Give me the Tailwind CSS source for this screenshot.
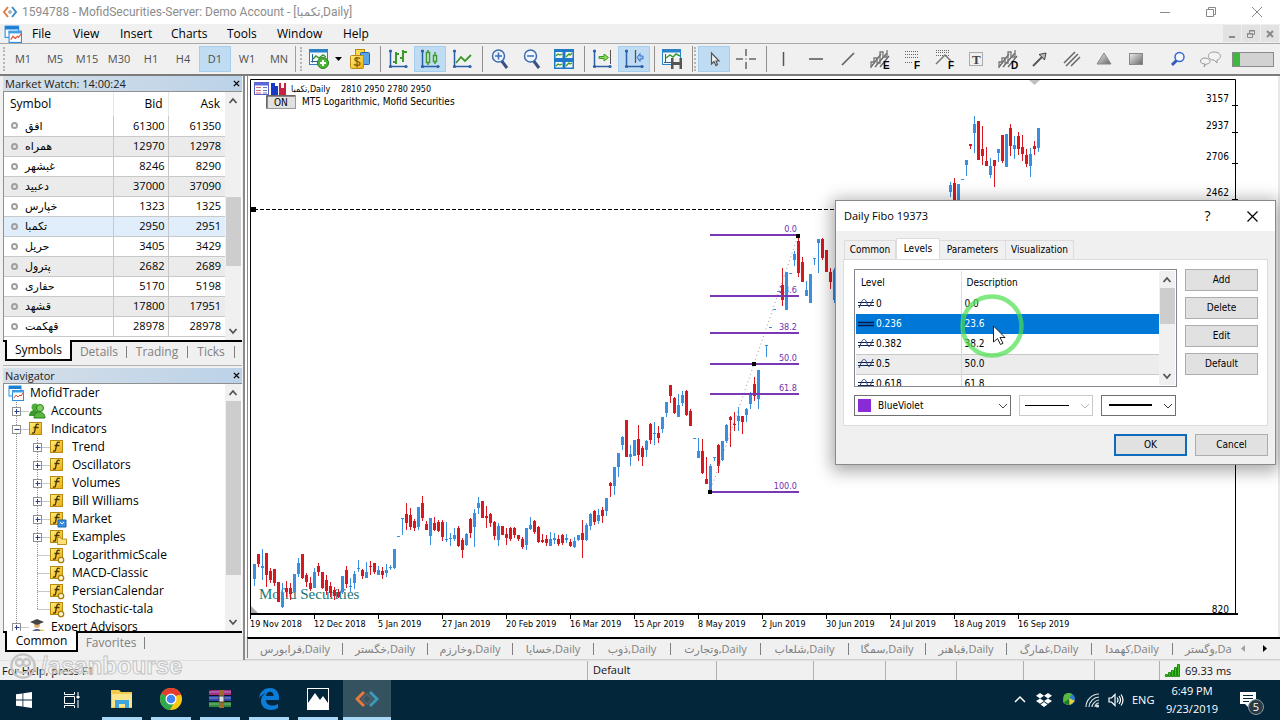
<!DOCTYPE html>
<html lang="en">
<head>
<meta charset="UTF-8">
<meta name="viewport" content="width=device-width, initial-scale=1.0">
<title>1594788 - MofidSecurities-Server: Demo Account</title>
<script src="https://cdn.jsdelivr.net/npm/@tailwindcss/browser@4"></script>
</head>
<body class="relative h-screen min-h-[600px] flex flex-col overflow-hidden bg-[#f0f0f0] text-black text-[12px] leading-4 font-['Open_Sans','DejaVu_Sans',sans-serif]">

<svg class="absolute w-0 h-0">
<defs>
<linearGradient id="gold" x1="0" y1="0" x2="1" y2="1"><stop offset="0" stop-color="#fff27a"/><stop offset="1" stop-color="#e8ab10"/></linearGradient>
<linearGradient id="steel" x1="0" y1="0" x2="1" y2="1"><stop offset="0" stop-color="#eee"/><stop offset="1" stop-color="#666"/></linearGradient>
</defs>
<symbol id="i-app" viewBox="0 0 16 16"><rect x="1" y="1" width="12" height="10" fill="#fff" stroke="#2f8fe0"/><path d="M1 2.500h12" stroke="#1c7fd6" stroke-width="3"/><rect x="4.500" y="5.500" width="11" height="10" fill="#fff" stroke="#2f8fe0"/><path d="M4 6.500h12" stroke="#3fa0ea" stroke-width="2"/><path d="M6 13l2-3 2 2 2-2 1 1 2-3" fill="none" stroke="#e0502a"/></symbol>
<symbol id="i-fx" viewBox="0 0 18 18"><rect x="0.500" y="2.500" width="12" height="12" fill="url(#gold)" stroke="#b98a12"/><path d="M10 4.500c-2-1-3 0-3.300 2L5.500 12c-.3 1.200-1 1.400-2.500.8M4.500 7.500h5" fill="none" stroke="#4a3200" stroke-width="1.300"/></symbol>
<symbol id="i-axes" viewBox="0 0 22 22"><path d="M3.500 2v16.500H20" fill="none" stroke="#2b5fa8" stroke-width="1.500"/><circle cx="3.500" cy="3" r="1.600" fill="#2b5fa8"/><circle cx="3.500" cy="18.500" r="1.600" fill="#2b5fa8"/><circle cx="19" cy="18.500" r="1.600" fill="#2b5fa8"/></symbol>
<symbol id="i-up" viewBox="0 0 10 10"><path d="M1.500 7L5 3l3.500 4" fill="none" stroke="#505050" stroke-width="1.700"/></symbol>
<symbol id="i-down" viewBox="0 0 10 10"><path d="M1.500 3L5 7l3.500-4" fill="none" stroke="#505050" stroke-width="1.700"/></symbol>
<symbol id="i-close" viewBox="0 0 8 8"><path d="M1 1l6 6M7 1L1 7" stroke="#000" stroke-width="1.600"/></symbol>
<symbol id="i-waves" viewBox="0 0 22 22"><path d="M2 19L12 6M6 19L18 5M11 19L20 8" stroke="#666" stroke-width="1.300"/><path d="M2 20V14H5V10H8V15H11V4H14V9H18V2" fill="none" stroke="#777" stroke-width="1.300"/></symbol>
<symbol id="i-level" viewBox="0 0 16 12"><path d="M0 4.500h16M0 7.500h16" stroke="#10204a"/><path d="M1 10L4 3c1-2 3-2 4 0l1.500 4c1 2 2 2 3 0L15 1" fill="none" stroke="#24407a"/></symbol>
</svg>

<!-- window title -->
<header class="h-6 shrink-0 flex items-center bg-white text-[#8c8c8c]">
  <svg class="w-4 h-4 ml-[2px]" viewBox="0 0 16 16"><path d="M6 3L2 8l4 5" fill="none" stroke="#e8793a" stroke-width="2"/><path d="M10 3l4 5-4 5" fill="none" stroke="#3a8fc8" stroke-width="2"/><path d="M8 5.500L10.500 8 8 10.500 5.500 8z" fill="#a8b4bc"/></svg>
  <h1 class="ml-1 grow whitespace-nowrap font-['Roboto','DejaVu_Sans',sans-serif]">1594788 - MofidSecurities-Server: Demo Account - [تکمبا,Daily]</h1>
  <button class="w-[46px] flex justify-center" aria-label="Minimize"><svg class="w-3 h-3" viewBox="0 0 12 12"><path d="M1 6.500h10" stroke="#888"/></svg></button>
  <button class="w-[46px] flex justify-center" aria-label="Restore"><svg class="w-3 h-3" viewBox="0 0 12 12" fill="none" stroke="#888"><path d="M1.500 3.500h7v7h-7zM3.500 3.500v-2h7v7h-2"/></svg></button>
  <button class="w-[46px] flex justify-center" aria-label="Close"><svg class="w-3 h-3" viewBox="0 0 12 12"><path d="M1 1l10 10M11 1L1 11" stroke="#888"/></svg></button>
</header>

<!-- menu -->
<nav class="h-5 shrink-0 flex items-center border-b border-[#a8a8a8]">
  <svg class="w-[18px] h-[18px] ml-1 mr-[10px]"><use href="#i-app"/></svg>
  <div class="grow grid grid-cols-[41px_47px_51px_56px_50px_66px_50px] whitespace-nowrap">
    <a href="#">File</a><a href="#">View</a><a href="#">Insert</a><a href="#">Charts</a><a href="#">Tools</a><a href="#">Window</a><a href="#">Help</a>
  </div>
  <div class="flex gap-px pr-px">
    <button class="w-[18px] h-[17px] bg-[#e2e2e2] flex items-center justify-center" aria-label="Minimize chart"><svg class="w-[10px] h-[10px]" viewBox="0 0 10 10"><path d="M2 8h6" stroke="#8a8a8a" stroke-width="2"/></svg></button>
    <button class="w-[18px] h-[17px] bg-[#e2e2e2] flex items-center justify-center" aria-label="Restore chart"><svg class="w-[10px] h-[10px]" viewBox="0 0 10 10" fill="none" stroke="#8a8a8a"><path d="M1.500 4.500h5v4h-5zM3.500 4V1.500h5v4H7M1 5h6M3 2h6"/></svg></button>
    <button class="w-[18px] h-[17px] bg-[#e2e2e2] flex items-center justify-center" aria-label="Close chart"><svg class="w-[10px] h-[10px]" viewBox="0 0 10 10"><path d="M2 2l6 6M8 2L2 8" stroke="#8a8a8a" stroke-width="2"/></svg></button>
  </div>
</nav>

<!-- toolbar -->
<div class="h-8 shrink-0 flex items-center border-b-2 border-[#7c7c7c] overflow-hidden">
  <span class="w-[2px] h-6 ml-[3px] mr-[2px] border-l-2 border-dotted border-[#b5b5b5]"></span>
  <div class="flex text-[11px] text-[#505050] text-center">
    <button class="w-8 h-[26px]">M1</button><button class="w-8">M5</button><button class="w-8">M15</button><button class="w-8">M30</button><button class="w-8">H1</button><button class="w-8">H4</button><button class="w-8 bg-[#bfdcf3] border border-[#a5cdee]">D1</button><button class="w-8">W1</button><button class="w-8">MN</button>
  </div>
  <span class="w-px h-[26px] bg-[#a0a0a0]"></span>
  <span class="w-[3px] h-6 ml-1 border-l-2 border-dotted border-[#b5b5b5]"></span>
  <button class="w-8 flex justify-center" aria-label="New chart"><svg class="w-[22px] h-[22px]" viewBox="0 0 22 22"><rect x="1.500" y="1.500" width="18" height="15" fill="#f4fafd" stroke="#2a83c8"/><path d="M1 3h19" stroke="#2a83c8" stroke-width="3"/><path d="M4.500 6v8.500M3 13.500h14" stroke="#2a5f98"/><path d="M5 11l3-3 3 2 4-3 3 2" fill="none" stroke="#3c9a2a" stroke-width="1.500"/><circle cx="15" cy="15" r="5.500" fill="#4cb436" stroke="#2b8020"/><path d="M15 12v6M12 15h6" stroke="#fff" stroke-width="2"/></svg></button>
  <button class="w-[9px]" aria-label="New chart menu"><svg class="w-[7px] h-1" viewBox="0 0 7 4"><path d="M0 0h7L3.500 4z"/></svg></button>
  <button class="w-8 flex justify-center" aria-label="Profiles"><svg class="w-[22px] h-[22px]" viewBox="0 0 22 22"><rect x="6.500" y="1.500" width="9" height="8" fill="#ffd94a" stroke="#b98a12"/><rect x="11.500" y="4.500" width="9" height="12" rx="1" fill="#5aa4e8" stroke="#2361a8"/><rect x="1.500" y="7.500" width="13" height="13" rx="1" fill="url(#gold)" stroke="#b98a12"/><path d="M11 10.500c-2-1.500-6-1-5 1.500s5 1 5 3.500-4 2.500-6 .8M8 9v10.500" fill="none" stroke="#8a5a00" stroke-width="1.300"/></svg></button>
  <span class="w-px h-[26px] ml-1 mr-px bg-[#909090]"></span>
  <button class="w-8 flex justify-center" aria-label="Bar chart"><svg class="w-[22px] h-[22px]" viewBox="0 0 22 22"><use href="#i-axes"/><path d="M9 4v12M6 14h3M9 6h3M16 2v12M13 10h3M16 4h4" stroke="#3c9a2a" stroke-width="2"/></svg></button>
  <button class="w-8 h-[26px] flex items-center justify-center bg-[#bfdcf3] border border-[#a5cdee]" aria-label="Candlesticks"><svg class="w-[22px] h-[22px]" viewBox="0 0 22 22"><use href="#i-axes"/><path d="M9 2v15M16 4v12" stroke="#3c9a2a" stroke-width="1.500"/><path d="M7.500 4.500h3v10h-3zM14.500 7.500h3v6h-3z" fill="#dff0e0" stroke="#3c9a2a" stroke-width="1.500"/></svg></button>
  <button class="w-8 flex justify-center" aria-label="Line chart"><svg class="w-[22px] h-[22px]" viewBox="0 0 22 22"><use href="#i-axes"/><path d="M5 15l5-6 4 4 6-6" fill="none" stroke="#3c9a2a" stroke-width="1.800"/></svg></button>
  <span class="w-px h-[26px] ml-1 mr-px bg-[#909090]"></span>
  <button class="w-8 flex justify-center" aria-label="Zoom in"><svg class="w-[22px] h-[22px]" viewBox="0 0 22 22"><path d="M12 12l6 8" stroke="#3b4f80" stroke-width="3"/><circle cx="9.500" cy="8" r="6" fill="#eef5fc" stroke="#3c6cb4" stroke-width="1.500"/><path d="M6 8h7M9.500 4.500v7" stroke="#3c6cb4" stroke-width="1.500"/></svg></button>
  <button class="w-8 flex justify-center" aria-label="Zoom out"><svg class="w-[22px] h-[22px]" viewBox="0 0 22 22"><path d="M12 12l6 8" stroke="#3b4f80" stroke-width="3"/><circle cx="9.500" cy="8" r="6" fill="#eef5fc" stroke="#3c6cb4" stroke-width="1.500"/><path d="M6 8h7" stroke="#3c6cb4" stroke-width="1.500"/></svg></button>
  <button class="w-8 flex justify-center" aria-label="Tile windows"><svg class="w-[22px] h-[22px]" viewBox="0 0 22 22"><rect x="1" y="1" width="20" height="20" fill="#1f78c8"/><path d="M2.500 4h7v6h-7zM12.500 4h7v6h-7zM2.500 14h7v5.500h-7zM12.500 14h7v5.500h-7z" fill="#f2faf2"/><path d="M3 8l2-2 2 1 2-1M13 9l3-3 1 1 2-2M3 18l2-2 2 1 2-1M13 18l3-3 1 1 2-1" fill="none" stroke="#3c9a2a" stroke-width="1.300"/></svg></button>
  <span class="w-px h-[26px] ml-1 mr-px bg-[#909090]"></span>
  <button class="w-8 flex justify-center" aria-label="Auto scroll"><svg class="w-[22px] h-[22px]" viewBox="0 0 22 22"><use href="#i-axes"/><path d="M19.500 2v14" stroke="#555"/><path d="M8 8.500h5V6l4.500 3.500L13 13v-2.500H8z" fill="#8fdc5a" stroke="#3c9a2a"/></svg></button>
  <button class="w-8 h-[26px] flex items-center justify-center bg-[#bfdcf3] border border-[#a5cdee]" aria-label="Chart shift"><svg class="w-[22px] h-[22px]" viewBox="0 0 22 22"><use href="#i-axes"/><path d="M12.500 2v13" stroke="#555" stroke-width="1.300"/><path d="M20 8h-3V5.500l-3 4 3 4V11h3z" fill="#9cc4f4" stroke="#3a70c8"/></svg></button>
  <span class="w-px h-[26px] ml-1 mr-px bg-[#909090]"></span>
  <button class="w-8 flex justify-center" aria-label="Templates"><svg class="w-[22px] h-[22px]" viewBox="0 0 22 22"><rect x="1.500" y="1.500" width="18" height="15" fill="#f4fafd" stroke="#2a83c8"/><path d="M1 3h19" stroke="#2a83c8" stroke-width="3"/><path d="M4.500 6v9M3 14.500h7" stroke="#2a5f98"/><path d="M5 10l4-3 3 2 3-3 4 2" fill="none" stroke="#3c9a2a" stroke-width="1.500"/><path d="M10 10h11v11H10z" fill="#555"/><path d="M12.500 10h6v4h-6zM12.500 17h6v4h-6z" fill="#f0f0f0"/></svg></button>
  <span class="w-px h-[26px] ml-1 mr-px bg-[#909090]"></span>
  <span class="w-1 h-6 border-l-2 border-dotted border-[#b5b5b5]"></span>
  <button class="w-8 h-[26px] flex items-center justify-center bg-[#bfdcf3] border border-[#a5cdee]" aria-label="Cursor"><svg class="w-[22px] h-[22px]" viewBox="0 0 22 22"><path d="M8.500 5v11l2.500-2.500 2 4 1.500-1-1.500-3.500h3z" fill="#f4f4f4" stroke="#555" stroke-width="1.200"/></svg></button>
  <button class="w-8 flex justify-center" aria-label="Crosshair"><svg class="w-[22px] h-[22px]" viewBox="0 0 22 22"><path d="M11 1v7M11 14v7M1 11h7M14 11h7M10.500 11h1" stroke="#666" stroke-width="1.500"/></svg></button>
  <span class="w-px h-[26px] ml-1 mr-px bg-[#909090]"></span>
  <button class="w-8 flex justify-center" aria-label="Vertical line"><svg class="w-[22px] h-[22px]" viewBox="0 0 22 22"><path d="M10.500 4v14" stroke="#555" stroke-width="1.500"/></svg></button>
  <button class="w-8 flex justify-center" aria-label="Horizontal line"><svg class="w-[22px] h-[22px]" viewBox="0 0 22 22"><path d="M4 11h14" stroke="#555" stroke-width="1.500"/></svg></button>
  <button class="w-8 flex justify-center" aria-label="Trend line"><svg class="w-[22px] h-[22px]" viewBox="0 0 22 22"><path d="M5 17L17 5" stroke="#666" stroke-width="1.700"/></svg></button>
  <button class="w-8 flex justify-center" aria-label="Equidistant channel"><svg class="w-[22px] h-[22px]" viewBox="0 0 22 22"><use href="#i-waves"/><text x="14" y="21" class="font-['Liberation_Sans'] font-bold text-[10px]">E</text></svg></button>
  <button class="w-8 flex justify-center" aria-label="Fibonacci retracement"><svg class="w-[22px] h-[22px]" viewBox="0 0 22 22"><path d="M4 3.500h14M4 6.500h14M4 9.500h14M4 14.500h8" stroke="#666" stroke-dasharray="1 1"/><text x="13" y="21" class="font-['Liberation_Sans'] font-bold text-[10px]">F</text></svg></button>
  <button class="w-8 flex justify-center" aria-label="Fibonacci fan"><svg class="w-[22px] h-[22px]" viewBox="0 0 22 22"><path d="M3 2.500h14M3 4.500h14M3 7.500h14" stroke="#666" stroke-dasharray="1 1"/><path d="M3 16l9-9 6 6" fill="none" stroke="#777" stroke-width="1.500"/><text x="15" y="21" class="font-['Liberation_Sans'] font-bold text-[10px]">F</text></svg></button>
  <button class="w-8 flex justify-center" aria-label="Text"><svg class="w-[22px] h-[22px]" viewBox="0 0 22 22"><rect x="4.500" y="4.500" width="13" height="13" fill="none" stroke="#666" stroke-dasharray="1 1"/><text x="7" y="16" fill="#444" class="font-['Liberation_Serif'] font-bold text-[13px]">T</text></svg></button>
  <button class="w-8 flex justify-center" aria-label="Standard deviation channel"><svg class="w-[22px] h-[22px]" viewBox="0 0 22 22"><use href="#i-waves"/><text x="14" y="21" class="font-['Liberation_Sans'] font-bold text-[10px]">D</text></svg></button>
  <button class="w-8 flex justify-center" aria-label="Arrow"><svg class="w-[22px] h-[22px]" viewBox="0 0 22 22"><path d="M4 18L13 9" stroke="#555" stroke-width="1.800"/><path d="M17 5l-1.500 7-2.500-3-3-2.500z" fill="#bbb" stroke="#444"/></svg></button>
  <button class="w-8 flex justify-center" aria-label="Parallel lines"><svg class="w-[22px] h-[22px]" viewBox="0 0 22 22"><path d="M3 15L14 4M5 18L17 6M10 18l9-9" stroke="#666" stroke-width="1.500"/></svg></button>
  <button class="w-8 flex justify-center" aria-label="Triangle"><svg class="w-[22px] h-[22px]" viewBox="0 0 22 22"><path d="M11 5l7 11H4z" fill="url(#steel)" stroke="#888"/></svg></button>
  <button class="w-8 flex justify-center" aria-label="Rectangle"><svg class="w-[22px] h-[22px]" viewBox="0 0 22 22"><rect x="4.500" y="5.500" width="13" height="11" fill="url(#steel)" stroke="#888"/></svg></button>
  <span class="w-[9px] grow"></span>
  <button class="w-8 flex justify-center" aria-label="Search"><svg class="w-[22px] h-[22px]" viewBox="0 0 22 22"><path d="M10 12l-5 5" stroke="#3858c0" stroke-width="3"/><circle cx="12.500" cy="9" r="4.500" fill="#f4f8ff" stroke="#3a66d0" stroke-width="1.500"/></svg></button>
  <button class="w-8 flex justify-center" aria-label="Chat"><svg class="w-[22px] h-[22px]" viewBox="0 0 22 22" fill="#f2f2f2" stroke="#999"><path d="M15 12c-7 0-8-8 0-8s8 7 3 8l0 3z"/><path d="M6 16c-6 0-6-6 0-6s7 6 1 6l-2 3z"/></svg></button>
  <span class="w-[42px] h-[15px] ml-[6px] mr-[6px] shrink-0 bg-[#d2d2d2] border border-[#8a8a8a]"><span class="block w-[7px] h-full bg-[#3cb83c]"></span></span>
</div>

<main class="grow min-h-0 flex">
  <!-- left panels -->
  <aside class="w-[245px] shrink-0 flex flex-col pl-[3px] pr-px pb-2 border-r-2 border-[#8a8a8a]">
    <section class="h-[285px] shrink-0 flex flex-col" aria-label="Market Watch">
      <header class="h-[15px] shrink-0 flex items-center justify-between pl-[2px] pr-[2px] bg-linear-to-r from-[#d5dfe8] to-[#bcd2e8] text-[11px] text-[#202020]">
        <h2>Market Watch: 14:00:24</h2>
        <button aria-label="Close Market Watch"><svg class="w-[7px] h-[7px]"><use href="#i-close"/></svg></button>
      </header>
      <div class="grow min-h-0 flex bg-white border-l border-t border-[#909090] overflow-hidden">
        <table class="grow table-fixed border-collapse self-start text-[12px]">
          <colgroup><col class="w-[109px]"><col class="w-[55px]"><col></colgroup>
          <thead><tr class="h-[24px]">
            <th class="font-normal text-left pl-[6px] border-r border-[#e8e8e8]">Symbol</th><th class="font-normal text-right pr-[5px] border-r border-[#e8e8e8]">Bid</th><th class="font-normal text-right pr-[5px]">Ask</th>
          </tr></thead>
          <tbody id="quotes" class="text-[11px]"></tbody>
        </table>
        <div class="w-4 shrink-0 mr-px bg-[#f0f0f0] flex flex-col items-center py-1">
          <svg class="w-[10px] h-[10px]"><use href="#i-up"/></svg>
          <span class="w-[15px] h-[69px] mt-[91px] bg-[#cdcdcd]"></span>
          <svg class="w-[10px] h-[10px] mt-auto"><use href="#i-down"/></svg>
        </div>
      </div>
      <div class="h-[21px] shrink-0 flex items-center border-t-2 border-black text-[#808080]">
        <button class="-mt-[2px] h-[21px] ml-[2px] w-[67px] bg-white border-2 border-t-0 border-black text-black">Symbols</button>
        <button class="w-[54px]">Details</button><button class="w-[61px] border-l border-[#808080] h-3 leading-3">Trading</button><button class="w-[48px] border-x border-[#808080] h-3 leading-3">Ticks</button>
      </div>
    </section>

    <section class="mt-1 pt-[2px] border-t border-[#b0b0b0] grow min-h-0 flex flex-col" aria-label="Navigator">
      <header class="h-[15px] shrink-0 flex items-center justify-between pl-[2px] pr-[2px] bg-linear-to-r from-[#d5dfe8] to-[#bcd2e8] text-[11px] text-[#202020]">
        <h2>Navigator</h2>
        <button aria-label="Close Navigator"><svg class="w-[7px] h-[7px]"><use href="#i-close"/></svg></button>
      </header>
      <div class="grow min-h-0 flex bg-white border-l border-t border-[#909090] overflow-hidden">
        <ul id="tree" class="grow whitespace-nowrap"></ul>
        <div class="w-4 shrink-0 mr-px bg-[#f0f0f0] flex flex-col items-center py-1">
          <svg class="w-[10px] h-[10px]"><use href="#i-up"/></svg>
          <span class="w-[15px] h-[174px] mt-[3px] bg-[#cdcdcd]"></span>
          <svg class="w-[10px] h-[10px] mt-auto"><use href="#i-down"/></svg>
        </div>
      </div>
      <div class="h-[21px] shrink-0 flex items-center border-t-2 border-black text-[#808080]">
        <button class="-mt-[2px] h-[21px] ml-[2px] w-[73px] bg-white border-2 border-t-0 border-black text-black">Common</button>
        <button class="w-[67px] border-r border-[#808080] h-3 leading-3">Favorites</button>
      </div>
    </section>
  </aside>

  <!-- chart -->
  <section class="grow min-w-0 flex flex-col" aria-label="Chart">
    <div class="grow min-h-0 bg-white border-r-2 border-[#e8e8e8] overflow-hidden">
      <svg id="chart" class="w-full h-full text-[9px] font-['DejaVu_Sans_Condensed','Open_Sans',sans-serif]" viewBox="245 76 1033 561" preserveAspectRatio="xMinYMin meet">
        <path d="M247.500 76v561" stroke="#8a8a8a"/>
        <path d="M250.500 614V79.500H1235.500V614" fill="none" stroke="#000"/>
        <path d="M250 614h988" stroke="#000" stroke-width="2"/>
        <path d="M1232 105.500h6M1232 132.500h6M1232 163.500h6M1232 199.500h6" stroke="#000"/>
        <g class="text-[10px]" text-anchor="end"><text x="1229" y="102">3157</text><text x="1229" y="129">2937</text><text x="1229" y="160">2706</text><text x="1229" y="196">2462</text><text x="1229" y="613">820</text></g>
        <path d="M1029 80h11l-5.500 5z" fill="#c0c0c0"/>
        <path d="M251 606v7h7z" fill="#b0b0b0"/>
        <g id="dates"></g>
        <!-- header icons -->
        <rect x="254.500" y="82.500" width="14" height="12" fill="#fff" stroke="#5560c0"/><path d="M254 84h15" stroke="#5a68d8" stroke-width="3"/><path d="M256 87.500h5M256 90.500h5M256 93h5" stroke="#d06a7a"/><path d="M263 87.500h4M263 90.500h4M263 93h4" stroke="#6a78d0"/>
        <path d="M271 83h4v3h3v9h-7z" fill="#1838c8"/><path d="M279 83h2v5h3v-5h2v12h-7z" fill="#c82040"/>
        <text x="291" y="92">تکمبا,Daily</text><text x="341" y="92">2810 2950 2780 2950</text>
        <rect x="266.500" y="95.500" width="29" height="13" fill="#e0e0e0" stroke="#999"/><path d="M267 108V96h28" fill="none" stroke="#333"/>
        <text x="274" y="106" class="text-[10px]">ON</text><text x="302" y="105" class="text-[10px]">MT5 Logarithmic, Mofid Securities</text>
        <path d="M254 209.500H836" stroke="#000" stroke-dasharray="4 2"/><rect x="251" y="207" width="5" height="5"/>
        <text x="259" y="599" fill="#1a7878" class="text-[15px] font-['Liberation_Serif']">Mofid Securities</text>
        <g id="fiboLabels" fill="#7030b0" text-anchor="end"></g>
        <g id="candles" shape-rendering="crispEdges"></g>
        <path d="M710 492L798 236" stroke="#999" stroke-dasharray="1 3"/>
        <g id="fiboLines" stroke="#7a38b4" stroke-width="2"></g>
        <path d="M796 234h4v4h-4zM752 362h4v4h-4zM708 490h4v4h-4z"/>
      </svg>
    </div>
    <div class="h-[21px] shrink-0 ml-[2px] flex items-center border-t-2 border-black border-l border-l-[#808080] text-[#808080] text-[11px]">
      <div class="grow min-w-0 overflow-hidden py-1 grid grid-cols-[95px_85px_85px_81px_77px_90px_88px_77px_81px_85px_81px_58px] whitespace-nowrap text-center leading-3">
        <a href="#" class="border-r">فرابورس,Daily</a><a href="#" class="border-r">خگستر,Daily</a><a href="#" class="border-r">وخارزم,Daily</a><a href="#" class="border-r">خسایا,Daily</a><a href="#" class="border-r">ذوب,Daily</a><a href="#" class="border-r">وتجارت,Daily</a><a href="#" class="border-r">شلعاب,Daily</a><a href="#" class="border-r">سمگا,Daily</a><a href="#" class="border-r">فباهنر,Daily</a><a href="#" class="border-r">غمارگ,Daily</a><a href="#" class="border-r">کهمدا,Daily</a><a href="#" class="pl-3 text-left">وگستر,Daily</a>
      </div>
      <button class="w-[22px] flex justify-center" aria-label="Scroll left"><svg class="w-1 h-[7px]" viewBox="0 0 4 7"><path d="M4 0v7L0 3.500z" fill="#a0a0a0"/></svg></button>
      <button class="w-[22px] mr-1 flex justify-center" aria-label="Scroll right"><svg class="w-1 h-[7px]" viewBox="0 0 4 7"><path d="M0 0v7l4-3.500z"/></svg></button>
    </div>
    <div class="h-[2px] shrink-0 border-b border-[#d0d0d0]"></div>
  </section>
</main>

<!-- status bar -->
<footer class="relative h-5 shrink-0 flex items-center border-t border-[#e0e0e0] text-[#101010] text-[11px]">
  <p class="grow pl-[2px]">For Help, press F1</p>
  <p class="w-[129px] h-full border-l border-[#b0b0b0] pl-[5px] leading-[18px]">Default</p>
  <span class="w-[97px] h-full border-l border-[#b0b0b0]"></span><span class="w-[72px] h-full border-l border-[#b0b0b0]"></span><span class="w-[71px] h-full border-l border-[#b0b0b0]"></span><span class="w-[67px] h-full border-l border-[#b0b0b0]"></span><span class="w-[71px] h-full border-l border-[#b0b0b0]"></span><span class="w-[65px] h-full border-l border-[#b0b0b0]"></span>
  <p class="w-[121px] h-full border-l border-[#b0b0b0] pl-[5px] flex items-center gap-1"><svg class="w-4 h-4" viewBox="0 0 16 16" fill="#3cc020" stroke="#1f8a10"><path d="M.5 11.500h2v2h-2zM3.500 9.500h2v4h-2zM6.500 7.500h2v6h-2zM9.500 4.500h2v9h-2zM12.500 1.500h2v12h-2z"/></svg>69.33 ms</p>
  <div class="absolute left-[9px] -top-[9px] flex items-center gap-1 text-[24px] leading-7 font-bold font-['Liberation_Sans'] text-white/40 [-webkit-text-stroke:1px_#c4c4c4]">
    <svg class="w-7 h-7" viewBox="0 0 24 24" fill="none" stroke="#c4c4c4" stroke-width="2"><circle cx="12" cy="12" r="10"/><circle cx="9" cy="9" r="3"/><circle cx="15" cy="9" r="3"/><path d="M6 15q6 6 12 0"/></svg>/asanbourse
  </div>
</footer>

<!-- taskbar -->
<div class="h-10 shrink-0 flex items-stretch bg-[#03263a] text-white">
  <button class="w-12 flex items-center justify-center" aria-label="Start"><svg class="w-4 h-4" viewBox="0 0 16 16" fill="#fff"><path d="M0 2.300l6.500-.9v6.200H0zM7.300 1.300L16 0v7.600H7.300zM0 8.400h6.500v6.200L0 13.700zM7.300 8.400H16V16l-8.700-1.300z"/></svg></button>
  <button class="w-12 flex items-center justify-center" aria-label="Task view"><svg class="w-4 h-4" viewBox="0 0 16 16" fill="none" stroke="#fff"><path d="M.5 4.500h10v7H.5zM.5 0v2.500h10V0M.5 16v-2.500h10V16M14 0v3M14 8v8"/><path d="M13 4h2v2h-2z" fill="#fff"/></svg></button>
  <div class="grow flex gap-[9px] pl-[6px]">
    <button class="w-10 flex items-center justify-center border-b-[3px] border-[#a9d8f6]" aria-label="File Explorer"><svg class="w-6 h-6" viewBox="0 0 24 24"><path d="M1 3h8l2 2h11v16H1z" fill="#f2c94c"/><path d="M2 7h20v13H2z" fill="#fbe48e"/><path d="M5 21v-8h14v8h-4v-4H9v4z" fill="#3fa5dd"/></svg></button>
    <button class="w-10 flex items-center justify-center border-b-[3px] border-[#a9d8f6]" aria-label="Chrome"><svg class="w-6 h-6" viewBox="0 0 24 24"><circle cx="12" cy="12" r="11" fill="#f9c813"/><path d="M12 12L2.500 6.500a11 11 0 0 1 19 0z" fill="#e33b2e"/><path d="M12 12l-9.500-5.500A11 11 0 0 0 11 23l5-9z" fill="#2ea84f"/><path d="M12 7h9.800" stroke="#e33b2e" stroke-width="2"/><circle cx="12" cy="12" r="5.500" fill="#fff"/><circle cx="12" cy="12" r="4.300" fill="#4285f4"/></svg></button>
    <button class="w-10 flex items-center justify-center border-b-[3px] border-[#a9d8f6]" aria-label="WinRAR"><svg class="w-6 h-6" viewBox="0 0 24 24"><path d="M1 4l3-1h19v6H1z" fill="#a0308a"/><path d="M1 9h22v6H1z" fill="#2a48b0"/><path d="M1 15h22v5H1z" fill="#2f8a3a"/><path d="M1 8.500h22M1 14.500h22" stroke="#111"/><path d="M1 5h22M1 11h22M1 17h22" stroke="#ddd" stroke-opacity=".5"/><path d="M11 3h5v18h-5z" fill="#a06a28"/><rect x="11" y="9" width="5" height="6" fill="#ddd" stroke="#444"/></svg></button>
    <button class="w-10 flex items-center justify-center border-b-[3px] border-[#a9d8f6]" aria-label="Edge"><svg class="w-6 h-6" viewBox="0 0 24 24"><path d="M2 11C3 4 8 1 13 1c6 0 9 4.500 9 9v3H9c0 4 3 5.500 6.500 5.500 2.500 0 4-.6 5.500-1.500v4c-2 1.200-4 2-7 2-6 0-10-4-10-9 0-4 2-6.500 5.500-8C6 7 4 8.500 2 11zm7-2h7.500c0-3-1.500-4.200-3.500-4.200S9.500 6 9 9z" fill="#0c7cd8"/></svg></button>
    <button class="w-10 flex items-center justify-center border-b-[3px] border-[#a9d8f6]" aria-label="Photos"><svg class="w-6 h-6" viewBox="0 0 24 24"><rect x="1.500" y="1.500" width="21" height="21" fill="none" stroke="#fff"/><path d="M2 16L9 6l5 7 3-4 5 7v6H2z" fill="#fff"/></svg></button>
    <button class="w-12 -ml-1 flex items-center justify-center border-b-[3px] border-[#a9d8f6] bg-[#34525f]" aria-label="MofidTrader"><svg class="w-6 h-6" viewBox="0 0 24 24"><path d="M9 5l-7 7 7 7" fill="none" stroke="#e8793a" stroke-width="3"/><path d="M15 5l7 7-7 7" fill="none" stroke="#3a9ab8" stroke-width="3"/><path d="M12 7l5 5-5 5-5-5z" fill="none" stroke="#50606a" stroke-width="2"/></svg></button>
  </div>
  <div class="flex items-center gap-2">
    <svg class="w-4 h-4" viewBox="0 0 16 16"><path d="M3 10l5-5 5 5" fill="none" stroke="#fff" stroke-width="1.500"/></svg>
    <svg class="w-4 h-4" viewBox="0 0 16 16" fill="#fff"><path d="M4 1l4 2.700L4 6.400 0 3.700zM12 1l4 2.700-4 2.700-4-2.700zM4 6.400l4 2.700-4 2.700L0 9.100zM12 6.400l4 2.700-4 2.700-4-2.700zM8 10l3.500 2.500L8 15l-3.500-2.500z"/></svg>
    <svg class="w-4 h-4" viewBox="0 0 16 16"><circle cx="9" cy="7" r="6" fill="#2d7fd0"/><path d="M4 3a6 6 0 0 1 8-1L8 8l3 4a6 6 0 0 1-8-2z" fill="#58b83c"/><path d="M9 6l6 3-5 4z" fill="#f0d030"/><path d="M3 11l6-4v6z" fill="#1d7a30"/></svg>
    <svg class="w-4 h-4" viewBox="0 0 16 16" fill="none" stroke="#d8e0e4" stroke-width="1.200"><path d="M2 15C2 8 8 2 15 2M5 15c0-5 5-10 10-10M8 15c0-3 4-7 7-7M11 15c0-2 2-4 4-4"/><circle cx="13.500" cy="14" r="1" fill="#fff"/></svg>
    <svg class="w-4 h-4" viewBox="0 0 16 16" fill="none" stroke="#fff" stroke-width="1.200"><path d="M1 6h2.500L7 2.500v11L3.500 10H1zM9 5.500q2 2.500 0 5M11 4q3 4 0 8M13 2.500q4 5.500 0 11"/></svg>
    <span class="w-6 text-[11px]">ENG</span>
  </div>
  <p class="w-[50px] mx-[11px] flex flex-col justify-center text-center text-[11px] leading-[18px] whitespace-nowrap items-center"><span>6:49 PM</span><span>9/23/2019</span></p>
  <button class="relative w-10 mr-3 flex items-center justify-center" aria-label="Notifications"><svg class="w-4 h-4" viewBox="0 0 16 16"><path d="M0 0h16v12H9v4l-4-4H0z" fill="#fff"/><path d="M3 3.500h10M3 6.500h10M3 9.500h6" stroke="#03263a"/></svg><span class="absolute left-5 bottom-[5px] w-[16px] h-[16px] rounded-full bg-[#2a3a44] border border-[#8a98a0] text-[11px] leading-[14px] text-center">5</span></button>
</div>

<!-- fibo dialog -->
<div role="dialog" aria-labelledby="dlgTitle" class="absolute top-[200px] right-1 w-[441px] bg-[#f0f0f0] border border-[#8a8a8a] shadow-[0_3px_16px_3px_rgba(0,0,0,0.35)] text-[10px] font-['DejaVu_Sans_Condensed','Open_Sans',sans-serif]">
  <header class="h-[30px] flex items-center bg-white pl-2 font-['Open_Sans']">
    <h2 id="dlgTitle" class="grow text-[11px]">Daily Fibo 19373</h2>
    <button class="w-[45px] text-[14px]" aria-label="Help">?</button>
    <button class="w-[45px] flex justify-center" aria-label="Close dialog"><svg class="w-[11px] h-[11px]" viewBox="0 0 11 11"><path d="M.5.5l10 10M10.500.5l-10 10" stroke="#000" stroke-width="1.200"/></svg></button>
  </header>
  <div class="px-[7px] pt-[7px] pb-2">
    <div class="flex items-end" role="tablist">
      <button role="tab" class="w-[52px] h-[19px] ml-[1px] border border-b-0 border-[#dcdcdc]">Common</button>
      <button role="tab" aria-selected="true" class="w-[44px] h-[21px] bg-white border border-b-0 border-[#dcdcdc]">Levels</button>
      <button role="tab" class="w-[66px] h-[19px] border border-l-0 border-b-0 border-[#dcdcdc]">Parameters</button>
      <button role="tab" class="w-[68px] h-[19px] border border-l-0 border-b-0 border-[#dcdcdc]">Visualization</button>
    </div>
    <div class="bg-white border border-[#dcdcdc] pt-[9px] pl-[10px] pr-[9px] pb-[9px]">
      <div class="flex gap-2">
        <div class="relative grow h-[118px] flex border border-[#828790] p-px overflow-hidden">
          <table class="grow table-fixed border-collapse self-start">
            <colgroup><col class="w-[105px]"><col></colgroup>
            <thead><tr class="h-[23px]"><th class="font-normal text-left pl-[5px] border-r border-[#e0e0e0]">Level</th><th class="font-normal text-left pl-[5px]">Description</th></tr></thead>
            <tbody>
              <tr class="h-5"><td class="pl-[2px] border-r border-[#d8d8d8]"><span class="flex items-center gap-[2px]"><svg class="w-4 h-3"><use href="#i-level"/></svg>0</span></td><td class="pl-[3px]">0.0</td></tr>
              <tr class="h-5 bg-[#0078d7] text-white"><td class="pl-[2px] border-r border-[#4a9ce0]"><span class="flex items-center gap-[2px]"><svg class="w-4 h-3" viewBox="0 0 16 12"><path d="M0 4.500h16M0 7.500h16" stroke="#061a50" stroke-width="1.500"/></svg>0.236</span></td><td class="pl-[3px]">23.6</td></tr>
              <tr class="h-5 border-b border-[#c8c8c8]"><td class="pl-[2px] border-r border-[#d8d8d8]"><span class="flex items-center gap-[2px]"><svg class="w-4 h-3"><use href="#i-level"/></svg>0.382</span></td><td class="pl-[3px]">38.2</td></tr>
              <tr class="h-5 bg-[#ececec] border-b border-[#c8c8c8]"><td class="pl-[2px] border-r border-[#d8d8d8]"><span class="flex items-center gap-[2px]"><svg class="w-4 h-3"><use href="#i-level"/></svg>0.5</span></td><td class="pl-[3px]">50.0</td></tr>
              <tr class="h-5"><td class="pl-[2px] border-r border-[#d8d8d8]"><span class="flex items-center gap-[2px]"><svg class="w-4 h-3"><use href="#i-level"/></svg>0.618</span></td><td class="pl-[3px]">61.8</td></tr>
            </tbody>
          </table>
          <div class="w-4 shrink-0 bg-[#f0f0f0] flex flex-col items-center py-1">
            <svg class="w-[10px] h-[10px]"><use href="#i-up"/></svg>
            <span class="w-[15px] h-[36px] mt-[3px] bg-[#cdcdcd]"></span>
            <svg class="w-[10px] h-[10px] mt-auto"><use href="#i-down"/></svg>
          </div>
        </div>
        <div class="w-[73px] flex flex-col gap-[6px]">
          <button class="h-[22px] bg-[#e1e1e1] border border-[#adadad]">Add</button><button class="h-[22px] bg-[#e1e1e1] border border-[#adadad]">Delete</button><button class="h-[22px] bg-[#e1e1e1] border border-[#adadad]">Edit</button><button class="h-[22px] bg-[#e1e1e1] border border-[#adadad]">Default</button>
        </div>
      </div>
      <div class="mt-2 flex gap-2">
        <div class="relative w-[157px]">
          <select aria-label="Colour" class="w-full h-[21px] appearance-none bg-white border border-[#707070] pl-[23px]"><option>BlueViolet</option></select>
          <span class="absolute left-1 top-1 w-[13px] h-[13px] bg-[#8a2bd8] pointer-events-none"></span>
          <svg class="absolute right-[3px] top-[6px] w-[10px] h-[10px] pointer-events-none" viewBox="0 0 10 10"><path d="M1 3l4 4 4-4" fill="none" stroke="#444"/></svg>
        </div>
        <div class="relative w-[74px]">
          <select aria-label="Line style" disabled class="w-full h-[21px] appearance-none bg-white border border-[#c8c8c8]"><option label=" "></option></select>
          <svg class="absolute left-[6px] top-[10px] w-11 h-px pointer-events-none" viewBox="0 0 44 1"><path d="M0 .5h44" stroke="#000"/></svg>
          <svg class="absolute right-[3px] top-[6px] w-[10px] h-[10px] pointer-events-none" viewBox="0 0 10 10"><path d="M1 3l4 4 4-4" fill="none" stroke="#b8b8b8"/></svg>
        </div>
        <div class="relative w-[75px]">
          <select aria-label="Line width" class="w-full h-[21px] appearance-none bg-white border border-[#707070]"><option label=" "></option></select>
          <svg class="absolute left-[8px] top-[9px] w-[43px] h-[2px] pointer-events-none" viewBox="0 0 43 2"><path d="M0 1h43" stroke="#000" stroke-width="2"/></svg>
          <svg class="absolute right-[3px] top-[6px] w-[10px] h-[10px] pointer-events-none" viewBox="0 0 10 10"><path d="M1 3l4 4 4-4" fill="none" stroke="#444"/></svg>
        </div>
      </div>
    </div>
    <div class="mt-2 flex justify-end gap-2">
      <button class="w-[73px] h-[22px] bg-[#e1e1e1] border-2 border-[#0f6cbd]">OK</button><button class="w-[73px] h-[22px] bg-[#e1e1e1] border border-[#adadad]">Cancel</button>
    </div>
  </div>
  <!-- pointer with click halo -->
  <svg class="absolute left-[124px] top-[91px] w-[66px] h-[66px] pointer-events-none" viewBox="0 0 66 66"><circle cx="32" cy="34" r="29.500" fill="none" stroke="#4be04b" stroke-opacity=".7" stroke-width="4.500"/><path d="M33.500 34v16l4-3.500 3 6 2.500-1.200-3-5.800h5z" fill="#fff" stroke="#222"/></svg>
</div>

<script>
    const quotes = [
        ['افق', 61300, 61350], ['همراه', 12970, 12978], ['غبشهر', 8246, 8290], ['دعبید', 37000, 37090],
        ['خپارس', 1323, 1325], ['تکمبا', 2950, 2951], ['حریل', 3405, 3429], ['پترول', 2682, 2689],
        ['حفاری', 5170, 5198], ['قشهد', 17800, 17951], ['قهکمت', 28978, 28978]
    ];

    document.getElementById('quotes').innerHTML = quotes.map(([name, bid, ask], i) => {
        const bg = name === 'تکمبا' ? 'bg-[#e0eefb]' : i % 2 ? 'bg-[#ebebeb]' : 'bg-white';
        return `<tr class="h-5 border-b border-[#c8c8c8] ${bg}">
            <td class="pl-[7px] border-r border-[#c8c8c8]"><span class="flex items-center gap-[7px]"><span class="w-[7px] h-[7px] rounded-full border-2 border-[#a0a0a0]"></span><span class="text-[11px]">${name}</span></span></td>
            <td class="pr-[3px] text-right border-r border-[#c8c8c8]">${bid}</td><td class="pr-1 text-right">${ask}</td></tr>`;
    }).join('');

    // [label, depth, expander, icon]
    const tree = [
        ['MofidTrader', 0, '', 'app'], ['Accounts', 1, '+', 'accounts'], ['Indicators', 1, '-', 'fx'],
        ['Trend', 2, '+', 'fx'], ['Oscillators', 2, '+', 'fx'], ['Volumes', 2, '+', 'fx'], ['Bill Williams', 2, '+', 'fx'],
        ['Market', 2, '+', 'market'], ['Examples', 2, '+', 'folder'], ['LogarithmicScale', 2, '', 'custom'],
        ['MACD-Classic', 2, '', 'custom'], ['PersianCalendar', 2, '', 'custom'], ['Stochastic-tala', 2, '', 'custom'],
        ['Expert Advisors', 1, '+', 'expert']
    ];
    const fx = '<use href="#i-fx"/>';
    const icons = {
        fx: fx,
        market: fx + '<path d="M8 10h8v7H8z" fill="#3b8fe0" stroke="#1b62b0"/><path d="M10 12l2 2 2-2" fill="none" stroke="#fff"/>',
        folder: fx + '<path d="M7.500 9.500h3l1 1.500h5v5.500h-9z" fill="#ffe07a" stroke="#c09020"/>',
        custom: fx + '<circle cx="11" cy="14" r="2.700" fill="#fff8d0" stroke="#a87c10" stroke-width="1.300"/>',
        accounts: '<circle cx="6" cy="5" r="3.500" fill="#4fae3a"/><path d="M0 14c0-8 11-8 11 0z" fill="#3c9a2a"/><circle cx="11" cy="6" r="3.500" fill="#7fd060" stroke="#2b7a20"/><path d="M5 16c0-8 11-8 11 0z" fill="#58b83c" stroke="#2b7a20"/>',
        expert: '<circle cx="8" cy="7" r="3" fill="#e0b070"/><path d="M1 4l7-3 7 3-7 3z" fill="#444"/><path d="M2 17c0-8 12-8 12 0z" fill="#5a6a80"/><circle cx="13" cy="14" r="2.500" fill="#e8c030"/>'
    };
    document.getElementById('tree').innerHTML = tree.map(([label, depth, box, icon]) => {
        if (depth === 0) {
            return `<li class="h-[18px] flex items-center"><svg class="w-4 h-4 ml-1 mr-[6px]"><use href="#i-app"/></svg>${label}</li>`;
        }
        const x = depth === 1 ? 12.5 : 33.5;
        const end = depth === 1 ? 25 : 46;
        let d = `M12.5 0V18M${x} 9.5H${end}`;
        if (depth === 2) d += label === 'Stochastic-tala' ? 'M33.5 0V9' : 'M33.5 0V18';
        const size = depth === 1 ? 'w-[25px]' : 'w-[46px]';
        const expander = box && `<rect x="${x - 4}" y="5.5" width="8" height="8" fill="#fff" stroke="#909090"/><path d="M${x - 2} 9.5h5${box === '+' ? `M${x} 7v5` : ''}" stroke="#2a3f90"/>`;
        return `<li class="h-[18px] flex items-center"><svg class="${size} h-[18px] shrink-0" viewBox="0 0 ${end} 18"><path d="${d}" stroke="#909090" stroke-dasharray="1 1"/>${expander}</svg><svg class="w-[18px] h-[18px] mr-1 shrink-0" viewBox="0 0 18 18">${icons[icon]}</svg>${label}</li>`;
    }).join('');

    // high, body top, body bottom, low, direction
    const left = `564 564 579 586 u,554 554 564 567 d,549 566 568 580 u,553 553 575 587 d,568 571 580 583 d,569 569 583 586 d,582 582 602 602 d,583 593 607 608 u,581 588 592 597 d,583 588 594 600 d,574 574 592 592 u,558 563 574 577 u,554 554 578 579 d,573 575 582 587 d,577 583 589 591 d,568 572 588 588 u,563 566 572 576 d,572 572 588 589 d,575 580 591 595 d,582 586 593 597 d,587 590 596 600 d,589 592 597 598 d,576 576 592 594 u,566 570 584 588 d,578 586 587 592 u,571 574 583 589 u,560 568 569 572 u,569 570 576 579 d,562 572 578 578 u,561 566 567 575 d,563 563 572 574 d,566 570 575 575 u,567 571 575 579 d,564 570 573 577 u,565 567 568 570 u,549 549 568 569 u,536 536 537 537 u,518 518 519 535 u,503 514 523 530 d,508 515 527 530 d,519 521 528 531 d,507 507 527 530 u,496 503 518 521 d,521 524 530 530 d,518 518 536 545 u,517 523 530 531 d,520 522 531 532 d,520 522 537 541 d,522 539 540 542 u,533 538 539 546 u,528 535 539 541 u,526 528 546 547 d,538 540 550 558 d,533 534 545 546 u,518 519 533 538 d,509 513 527 547 u,497 503 508 514 u,501 501 518 518 d,506 516 518 528 d,513 514 523 527 d,521 522 536 540 d,523 526 540 546 u,526 526 535 535 d,528 534 538 545 d,527 528 539 541 d,527 528 535 538 d,535 535 539 541 d,537 539 547 549 d,528 528 545 550 u,517 525 529 530 u,520 521 532 534 d,526 527 542 543 d,534 540 542 543 d,535 539 543 546 d,532 539 546 546 u,533 538 540 544 u,535 539 544 546 d,534 535 543 545 d,534 538 540 543 u,539 542 546 547 d,537 541 547 548 u,535 535 540 541 u,520 533 540 558 d,523 525 540 541 u,513 514 526 530 u,510 511 522 525 d,509 515 521 524 u,507 510 516 523 d,498 498 511 516 u,482 483 486 497 d,467 467 486 495 u,453 453 467 477 u,436 437 445 450 u,420 420 457 457 d,445 454 457 466 u,440 440 456 456 u,425 439 455 461 d,446 448 457 466 d,440 441 450 457 u,423 424 440 444 d,422 433 434 445 u,426 433 438 443 d,417 417 429 433 u,402 402 413 417 u,385 385 396 403 d,397 398 413 414 d,394 405 417 417 u,391 395 403 406 u,390 391 415 416 d,409 411 426 426 d,438 438 439 439 u,438 451 458 458 u,439 451 473 474 d,457 479 484 484 d,464 466 491 492 u,457 457 458 461 u,444 445 466 473 d,441 441 460 461 u,424 425 441 443 u,416 417 420 447 d,412 424 425 431 d,407 416 421 431 u,416 416 422 434 d,408 409 415 422 u,392 393 404 409 u,377 384 396 401 d,370 370 399 409 u,364 364 365 365 u,345 345 346 357 u,327 327 328 328 u,309 309 310 310 u,291 291 292 292 u,268 285 300 306 d,272 272 310 310 u,273 273 274 274 u,251 254 260 266 u,238 241 273 277 d,257 262 282 282 d,281 290 296 296 u,274 274 303 303 u,258 258 259 265 u,239 239 243 273 u,238 239 258 260 d,250 250 272 272 d,268 272 282 289 d,268 270 300 303 u`;
    const right = `182 185 192 197 u,178 183 205 205 d,184 184 205 205 u,179 179 180 180 u,160 160 165 176 u,144 144 146 149 d,116 124 133 153 u,121 121 160 160 d,126 149 156 165 d,147 161 166 166 d,158 166 175 178 u,160 160 166 187 d,149 149 153 162 u,135 135 161 163 d,134 134 167 167 u,124 128 146 156 d,136 145 149 159 u,132 136 149 155 d,135 147 154 161 d,149 155 164 167 d,148 154 166 177 u,141 146 149 155 d,128 128 148 152 u`;

    function drawCandles(data, startX) {
        return data.split(',').map((row, i) => {
            const [high, top, bottom, low, dir] = row.split(' ');
            const color = dir === 'u' ? '#3a8ee0' : '#d81820';
            const x = startX + i * 4;
            return `<path d="M${x} ${top}h3V${bottom}h-3zM${x + 1} ${high}h1V${low}h-1z" fill="${color}"/>`;
        }).join('');
    }
    document.getElementById('candles').innerHTML = drawCandles(left, 253) + drawCandles(right, 949);

    const fibo = [['0.0', 235], ['23.6', 296], ['38.2', 333], ['50.0', 364], ['61.8', 394], ['100.0', 492]];
    document.getElementById('fiboLabels').innerHTML = fibo.map(([t, y]) => `<text x="797" y="${y - 3}">${t}</text>`).join('');
    document.getElementById('fiboLines').innerHTML = fibo.map(([, y]) => `<path d="M710 ${y}H799"/>`).join('');

    const dates = ['19 Nov 2018', '12 Dec 2018', '5 Jan 2019', '27 Jan 2019', '20 Feb 2019', '16 Mar 2019', '15 Apr 2019', '8 May 2019', '2 Jun 2019', '30 Jun 2019', '24 Jul 2019', '18 Aug 2019', '16 Sep 2019'];
    document.getElementById('dates').innerHTML = dates.map((d, i) => `<path d="M${250.5 + i * 64} 614v5" stroke="#000"/><text x="${250 + i * 64}" y="627">${d}</text>`).join('');
</script>
</body>
</html>
